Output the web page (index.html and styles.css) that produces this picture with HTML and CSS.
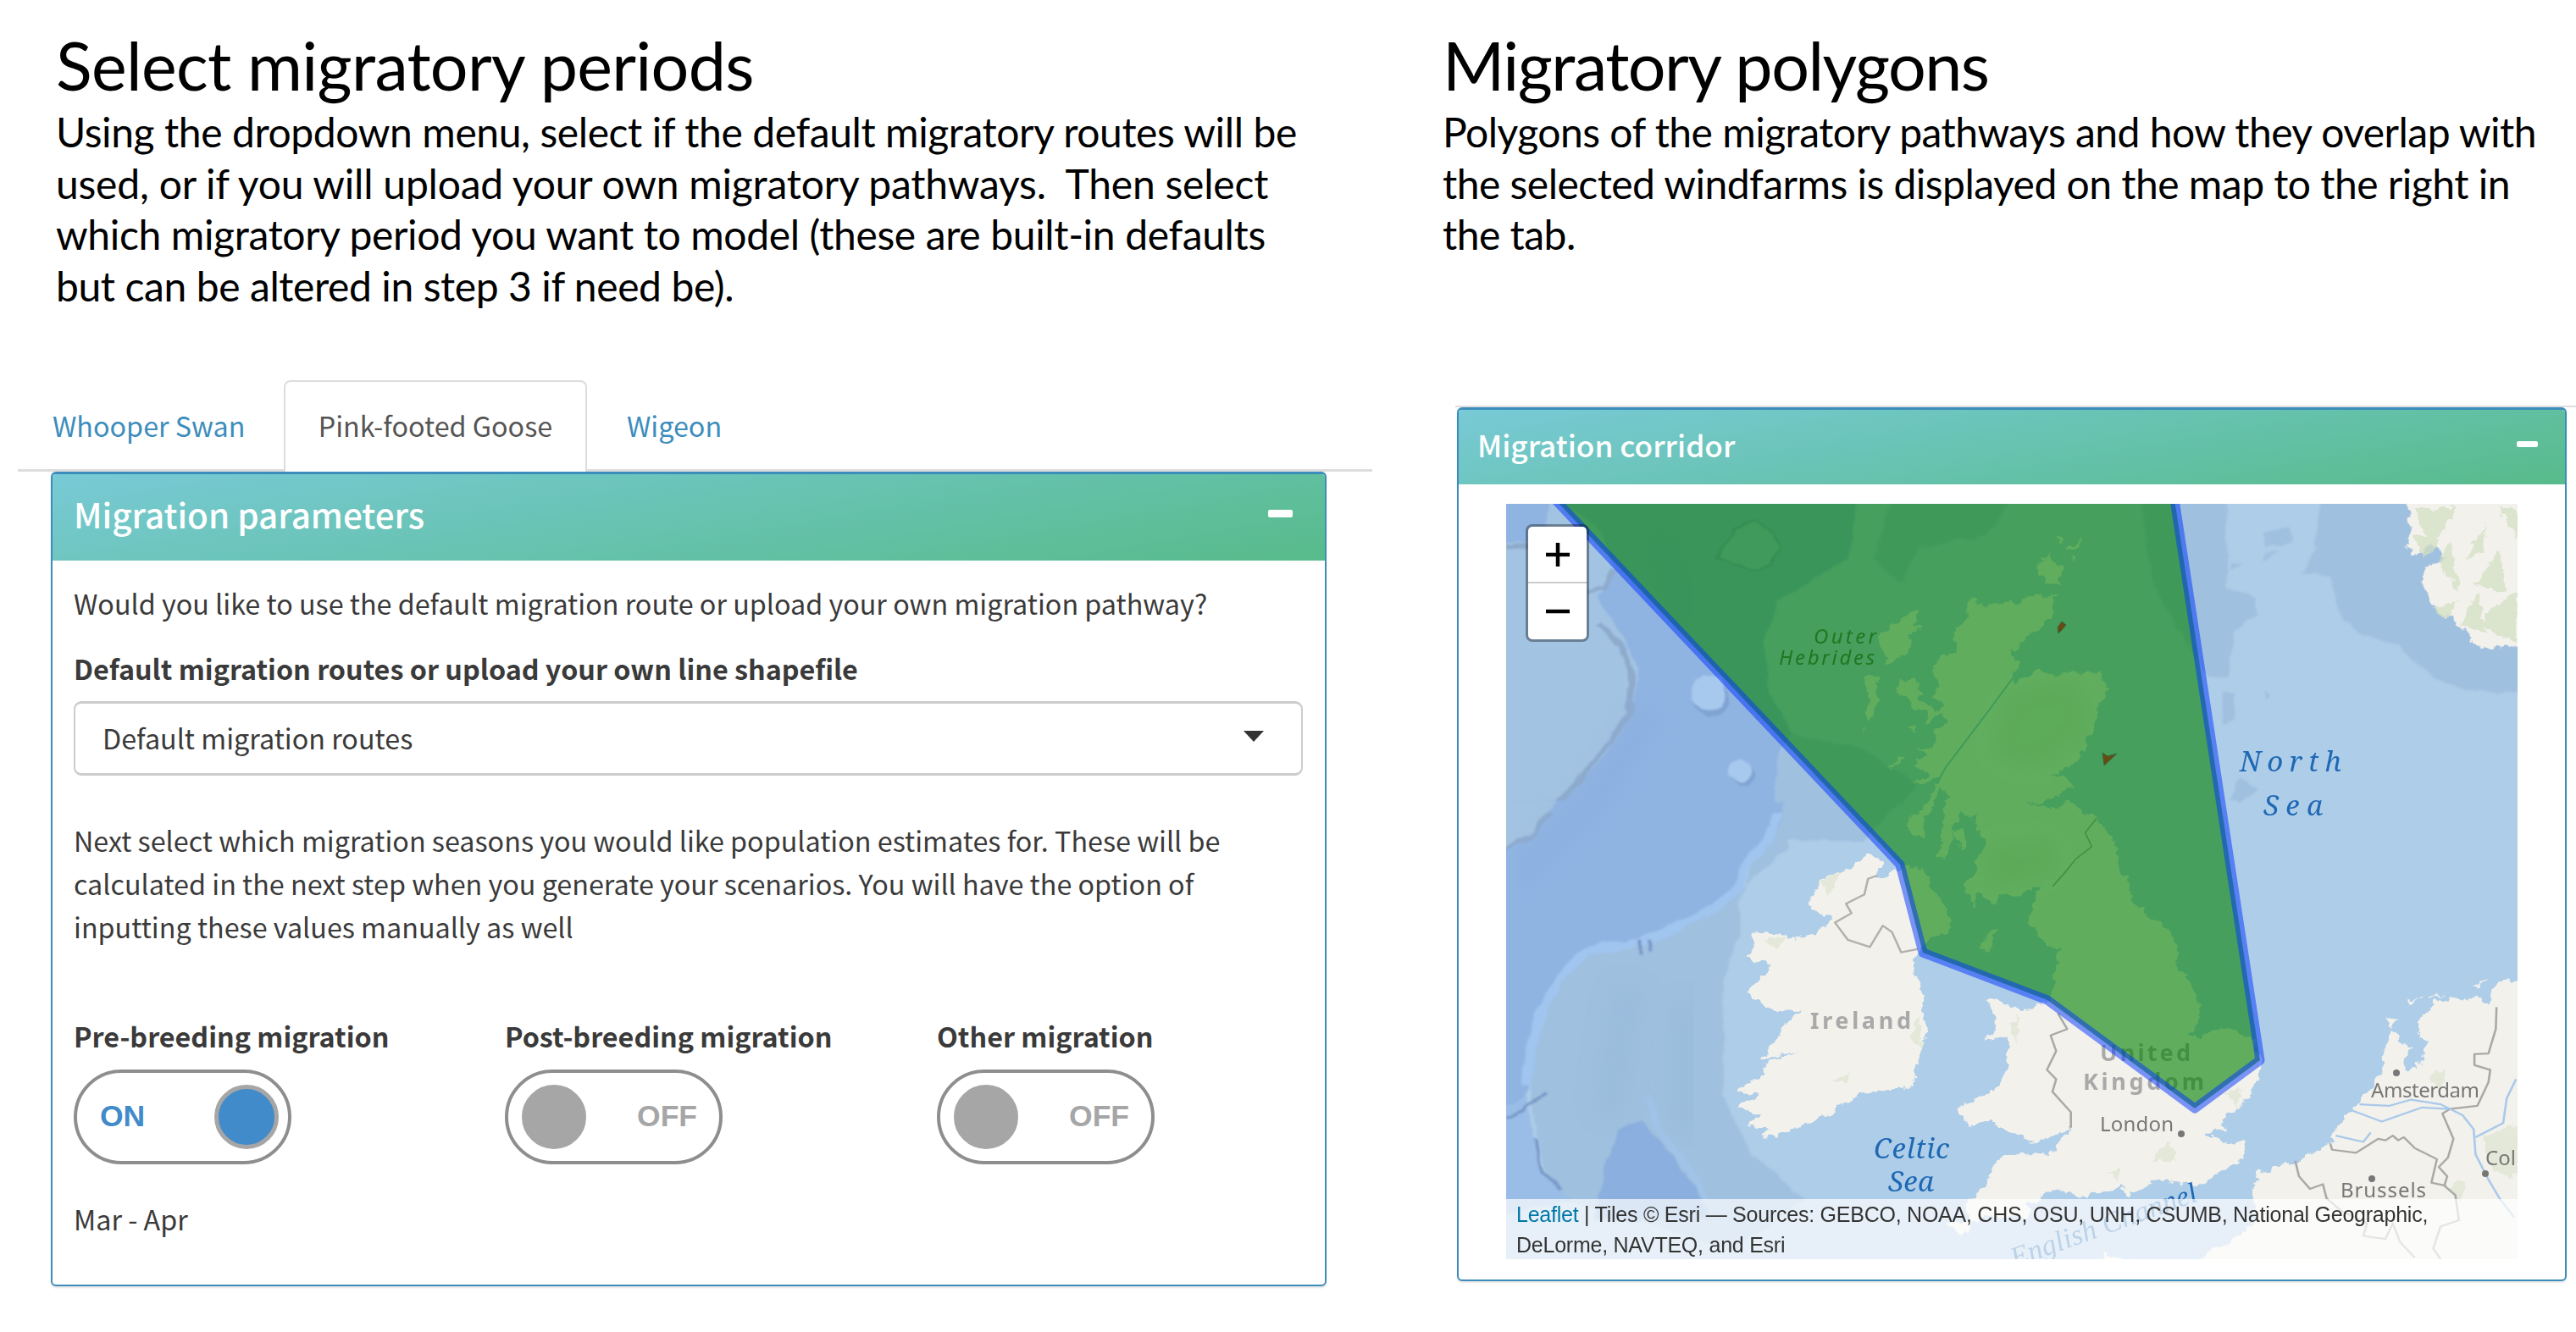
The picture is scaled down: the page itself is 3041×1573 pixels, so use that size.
FILE: index.html
```html
<!DOCTYPE html>
<html lang="en">
<head>
<meta charset="utf-8">
<title>Migratory periods and polygons</title>
<link rel="stylesheet" href="styles.css">
</head>
<body>
<main class="page">
  <section class="col col-left">
    <header class="intro">
      <h1 class="intro-title">Select migratory periods</h1>
      <p class="intro-text">Using the dropdown menu, select if the default migratory routes will be<br><span class="looser">used, or if you will upload your own migratory pathways.&nbsp; Then select</span><br><span class="loose">which migratory period you want to model (these are built-in defaults</span><br>but can be altered in step 3 if need be).</p>
    </header>
    <nav class="tabs">
      <a class="tab tab-first">Whooper Swan</a>
      <a class="tab tab-active">Pink-footed Goose</a>
      <a class="tab">Wigeon</a>
    </nav>
    <div class="panel panel-params">
      <div class="panel-head">
        <h2 class="panel-title">Migration parameters</h2>
        <span class="collapse"></span>
      </div>
      <div class="panel-body">
        <p class="question">Would you like to use the default migration route or upload your own migration pathway?</p>
        <p class="label">Default migration routes or upload your own line shapefile</p>
        <div class="select"><span>Default migration routes</span><svg class="caret" viewBox="0 0 24 13"><path d="M0 0H24L12 13Z"/></svg></div>
        <p class="next">Next select which migration seasons you would like population estimates for. These will be<br>calculated in the next step when you generate your scenarios. You will have the option of<br>inputting these values manually as well</p>
        <div class="toggles">
          <div class="toggle-group"><p class="label">Pre-breeding migration</p><div class="toggle toggle-on"><span>ON</span><i class="knob"></i></div></div>
          <div class="toggle-group"><p class="label">Post-breeding migration</p><div class="toggle"><i class="knob"></i><span>OFF</span></div></div>
          <div class="toggle-group"><p class="label">Other migration</p><div class="toggle"><i class="knob"></i><span>OFF</span></div></div>
        </div>
        <p class="months">Mar - Apr</p>
      </div>
    </div>
  </section>

  <section class="col col-right">
    <header class="intro">
      <h1 class="intro-title">Migratory polygons</h1>
      <p class="intro-text">Polygons of the migratory pathways and how they overlap with<br>the selected windfarms is displayed on the map to the right in<br>the tab.</p>
    </header>
    <div class="rule"></div>
    <div class="panel panel-map">
      <div class="panel-head">
        <h2 class="panel-title">Migration corridor</h2>
        <span class="collapse"></span>
      </div>
      <div class="map">
        <svg class="map-canvas" viewBox="1778 595 1194 892">
          <defs>
            <filter id="coast" x="-5%" y="-5%" width="110%" height="110%"><feTurbulence type="fractalNoise" baseFrequency="0.09" numOctaves="3" seed="4"/><feDisplacementMap in="SourceGraphic" scale="13" xChannelSelector="R" yChannelSelector="G"/></filter>
            <filter id="depth" x="-5%" y="-5%" width="110%" height="110%"><feTurbulence type="fractalNoise" baseFrequency="0.05" numOctaves="2" seed="9"/><feDisplacementMap in="SourceGraphic" scale="9" xChannelSelector="R" yChannelSelector="G"/><feGaussianBlur stdDeviation="1.2"/></filter>
            <filter id="soft" x="-5%" y="-5%" width="110%" height="110%"><feGaussianBlur stdDeviation="12"/></filter>
          </defs>
          <rect x="1778" y="595" width="1194" height="892" fill="#aecde8"/>
          <!-- sea depths -->
          <g filter="url(#depth)">
            <g transform="translate(1700 460) scale(.4337 .3333)">
              <path fill="#90b4e2" d="M100 300H1150L1110 600 920 750 880 900 900 1080 960 1220 920 1290 905 1580H100Z"/>
              <path fill="#9fc0df" d="M960 1220 920 1300 905 1600H1150L1300 1400 1150 1270Z"/>
              <path fill="#9fc0df" d="M1230 380 1180 600 1260 690 1300 560 1480 520 1568 380Z"/>
              <path fill="#a3c3e2" d="M100 545 290 540 290 470 310 380 440 500 475 640 450 700 430 740 500 880 540 980 520 1160 450 1300 300 1500 290 1590H100Z"/>
              <path fill="none" stroke="#8eabcd" stroke-width="18" d="M180 560 240 555M400 715 450 700 470 640M430 830 500 920 520 1000 515 1150 440 1290 310 1480 300 1600"/>
              <ellipse cx="737" cy="1095" rx="48" ry="62" fill="#7fa3d2"/><ellipse cx="731" cy="1074" rx="46" ry="62" fill="#a7c9ed"/>
              <ellipse cx="827" cy="1364" rx="36" ry="36" fill="#7fa3d2"/><ellipse cx="820" cy="1352" rx="34" ry="36" fill="#a7c9ed"/>
              <path fill="#9fc0e4" stroke="#7d9fcb" stroke-width="6" d="M755 600 800 500 850 460 900 500 930 560 900 620 850 645 810 620Z"/>
            </g>
            <g transform="translate(2360 460) scale(.4343 .3333)">
              <path fill="#9fc0df" d="M380 380H620V700L700 740V800L640 850 620 1020 570 1020 500 880 420 700Z"/>
              <path fill="#9fc0df" d="M875 380 860 560 820 650 900 660 930 820 1000 870 1090 910 1130 960 1190 1030 1300 1070 1430 1075V380Z"/>
              <path fill="#9fc0df" d="M720 500 790 490 800 540 720 560ZM640 1400 660 1380 700 1420 660 1460 630 1450ZM610 1070 640 1080V1170L610 1190ZM720 580 760 575 715 610ZM630 610 665 620 630 635ZM722 1070 738 1085 728 1105Z"/>
            </g>
            <g transform="translate(1700 960) scale(.4337 .37)">
              <path fill="#90b4e2" d="M100-40H940L920 70 850 130 830 220 760 300 540 400 400 430 340 500 290 620 250 760 240 880 200 960 100 1000Z"/>
              <path fill="#9fc0df" d="M945-40H1100L1050 30 960 50ZM940 0 900 90 850 150 835 230 760 310 640 380 540 430 400 450 340 520 290 640 250 780 245 900 280 1120 340 1234 800 1400 990 1234 840 1080 770 900V540L820 370 810 280 850 210 950 110Z"/>
              <path fill="#a3c3e2" d="M100-40H320L250 60 180 110 100 130Z"/>
              <path fill="none" stroke="#8eabcd" stroke-width="14" d="M300 0 240 80 170 120"/>
              <path fill="none" stroke="#a0c5ef" stroke-width="26" d="M920 0 890 90 830 170 810 240 740 310 640 370 540 415 400 440 330 520 275 640 240 780 235 870"/>
              <path fill="#9abde8" d="M100 990 235 900 270 1120 360 1240 100 1300Z"/>
              <path fill="none" stroke="#7797c6" stroke-width="9" d="M290 885 230 950 180 975M260 1040 270 1130 330 1200M545 405V450M570 405V440"/>
              <path fill="#8bafde" d="M420 1300 450 1120 490 1010 550 980 600 1050 640 1110 690 1180 740 1300Z"/>
              <path fill="none" stroke="#a0c3e6" stroke-width="22" d="M560 900 600 1020 650 1100 700 1170 720 1240"/>
            </g>
          </g>
          <!-- broad relief shading -->
          <g filter="url(#soft)" fill="none" stroke-linecap="round">
            <path stroke="#84a9db" stroke-opacity=".4" stroke-width="26" d="M1945 850 1880 950 1800 1030M1990 720 1960 640"/>
            <path stroke="#92b5d8" stroke-opacity=".3" stroke-width="36" d="M1920 1180 1900 1300M1990 1200V1320"/>
          </g>
          <!-- land -->
          <g filter="url(#coast)" fill="#f2f1ec">
            <!-- Scotland -->
            <g transform="translate(2200 595) scale(.3333)">
              <path d="M375 335 405 350 440 370 470 355 540 350 620 325 680 325 665 370 675 385 640 430 590 470 530 525 535 550 560 555 525 615 540 630 620 590 660 605 840 600 865 650 830 720 820 790 800 830 765 880 750 920 700 945 655 960 710 960 745 1000 700 1020 640 1060 580 1060 640 1075 690 1080 720 1055 820 1110 890 1190 910 1300 945 1410 1060 1500H590L600 1420 640 1365 600 1355 540 1395 480 1380 470 1420 430 1390 400 1375 390 1430 350 1350 390 1310 410 1250 435 1200 400 1150 400 1090 380 1120 350 1090 345 1110 325 1130 310 1210 285 1260 255 1250 280 1190 280 1120 300 1030 270 1000 245 1070 220 1110 215 1170 185 1180 150 1150 170 1100 220 1080 250 1010 280 960 230 985 170 995 230 960 180 930 195 905 230 900 190 870 250 855 250 800 290 770 260 740 285 720 250 680 270 640 250 610 265 550 290 540 330 520 315 490 330 470 320 440 355 425Z"/>
              <path d="M195 370 130 415 60 460 60 510 85 540 70 580 110 550 160 525 165 470 200 445 185 430 195 410ZM0 610 55 605 50 660 40 740 20 770 5 740 15 680ZM110 660 135 625 155 650 180 600 200 660 195 700 270 730 230 780 220 740 180 730 160 700ZM155 790 180 780 185 805ZM80 945 150 885 155 895 100 940ZM320 1160 345 1150 365 1210 350 1225 325 1200ZM0 800 15 790 0 815Z"/>
              <path d="M630 190 655 175 680 205 720 235 690 255 695 300 680 280 650 285 620 250ZM680 125 695 115 705 140 690 145ZM720 160 770 125 760 150 730 165ZM735 180 750 195 740 200Z"/>
              <path d="M150 1280 210 1290 235 1350 270 1400 250 1430 290 1430 305 1490V1520H205Z"/>
            </g>
            <g transform="translate(2360 460) scale(.4343 .3333)">
              <path d="M1100 380 1120 480 1110 560 1130 590 1175 545 1220 600 1155 630V700L1190 780 1270 850 1280 890 1330 920 1430 905V380Z"/>
            </g>
            <g transform="translate(1700 960) scale(.4337 .37)">
              <path d="M1170 130 1210 165 1180 215 1240 180 1300 170 1350 260 1385 340 1360 400 1330 400 1300 450 1285 490 1310 560 1325 690 1300 800 1285 870 1150 895 1060 960 920 1035 875 1030 900 1010 835 1000 870 965 810 940 870 900 800 885 860 850 880 830 890 795 980 760 880 785 930 700 975 630 890 625 835 570 870 530 900 490 835 460 860 420 850 385 940 385 960 405 1020 390 1070 340 1000 295 1040 210 1140 160Z"/>
              <path d="M1500 370 1520 375 1490 440 1470 435ZM1485 600 1530 595 1560 640 1520 650ZM1600 660 1520 680 1470 735 1550 710 1560 840 1500 890 1405 940 1440 1000 1500 980 1540 1010 1620 1000V860L1565 830 1560 720 1620 700ZM1600 1085 1535 1090 1500 1130 1490 1190 1430 1250 1440 1300 1370 1310 1425 1350 1470 1290 1600 1290Z"/>
            </g>
            <!-- England, Wales and the continent -->
            <g transform="translate(2360 960) scale(.4343 .37)">
              <path d="M150 200H345L370 310 440 350 490 430 480 470 520 545 545 620V670L515 705 540 730 570 695 640 695 690 730 715 800 690 890 655 940 600 990 615 1010 560 1030 630 1055 675 1050 665 1100 620 1130 540 1190 430 1175 370 1215 340 1190 220 1225 150 1195 100 1240-10 1290V1130L15 1095 150 1085 160 1050 205 1000 150 1030 100 1050-10 1000V880L30 800 20 720-10 700V600L60 630 130 610 150 560V490L170 430H130L85 330 110 240Z"/>
              <path d="M1430 530 1350 540 1330 610 1300 585 1190 600 1140 660V720L1165 730 1150 790 1100 830V780L1125 750 1095 740 1080 700 1060 700 1040 830 980 920 910 1020 900 1055 805 1110 700 1150 690 1240 700 1300 620 1380 560 1400 530 1460H1430ZM1070 650 1085 660 1065 690 1055 680ZM1110 600 1150 590 1115 610ZM1170 583 1220 580 1170 590ZM1290 550 1330 530 1300 560ZM330 1200 380 1195 350 1225ZM280 1405 360 1430 290 1430Z"/>
            </g>
          </g>
          <!-- vegetation tints -->
          <g filter="url(#coast)" fill="#d3dfc3" fill-opacity=".75">
            <path d="M2850 600H2900L2870 650ZM2890 640 2905 700 2880 670ZM2940 720 2972 700V760L2930 740ZM2920 690 2950 650 2960 700ZM2870 720 2900 710 2890 730ZM2950 600 2972 600V640ZM2880 640 2860 660 2850 630ZM2905 735 2925 700 2935 750ZM2910 660 2935 620 2930 650Z"/>
            <path fill-opacity=".5" d="M2255 1225 2265 1200 2270 1240ZM2160 1275 2185 1270 2175 1280ZM2540 1370 2560 1350 2570 1370ZM2370 1210 2385 1200 2380 1230ZM2395 1260 2410 1270ZM2870 1270 2885 1260 2880 1290ZM2890 1400 2910 1395 2905 1420ZM2930 1340 2972 1330V1390L2940 1380ZM2490 1385 2505 1380 2500 1395ZM2630 1290 2645 1280 2640 1310ZM2150 1040 2170 1030 2160 1060ZM2080 1110 2110 1105 2100 1120Z"/>
          </g>
          <g filter="url(#soft)" fill="#cfe0c2" fill-opacity=".35">
            <path d="M2370 820 2450 800 2470 860 2400 910 2350 890ZM2340 1000 2420 990 2430 1030 2350 1050Z"/>
          </g>
          <!-- borders and rivers -->
          <g fill="none" stroke-linejoin="round">
            <g transform="translate(1700 960) scale(.4337 .37)" stroke="#b2b1ae" stroke-width="6"><path d="M1190 200 1165 210 1155 260 1105 290 1120 320 1075 350 1110 405 1170 428 1205 360 1230 380 1255 445 1300 435"/></g>
            <g transform="translate(2360 960) scale(.4343 .37)">
              <g stroke="#a9a9a7" stroke-width="6"><path d="M160 640 185 690 140 710 155 760 130 820 155 850 145 890 195 955V1005"/><path d="M1352 620 1350 690 1330 768 1292 770V805L1335 820 1330 860 1300 935 1225 945 1205 960 1235 1040 1220 1100 1195 1130 1218 1160 1210 1190 1240 1220 1250 1300 1200 1320 1180 1390 1200 1425M900 1055 905 1075 970 1085 1030 1040 1050 1045 1070 1030 1085 1045 1100 1035 1130 1070 1190 1105 1175 1180 1215 1190M805 1110 815 1160 845 1200 880 1185 890 1230 930 1270 1000 1310 990 1350 1050 1360 1070 1310 1090 1370 1130 1420" /></g>
              <path stroke="#a9c9ea" stroke-width="6" d="M980 930 1060 935 1120 915 1200 930 1260 965 1290 1010 1295 1090 1330 1170 1360 1230 1400 1290M1295 1035 1370 990 1380 910 1405 850M960 950 1040 985 1150 940 1220 945M915 1030 990 1050 1010 1020M580 1035 560 1025"/>
            </g>
            <g transform="translate(2200 595) scale(.3333)">
              <path stroke="#a9a9a7" stroke-width="5" d="M825 1115 785 1165 808 1215 750 1260 710 1310 670 1355"/>
              <path stroke="#9fc0df" stroke-width="6" d="M530 615 430 750 290 935 260 990"/>
            </g>
          </g>
          <!-- sea and place labels -->
          <g class="sea">
            <text x="2644" y="911" textLength="120">North</text>
            <text x="2672" y="963" textLength="70">Sea</text>
            <text x="2212" y="1368" textLength="89">Celtic</text>
            <text x="2229" y="1407" textLength="54">Sea</text>
            <text class="channel" transform="translate(2378 1497) rotate(-20)" textLength="232">English Channel</text>
          </g>
          <g class="area">
            <text x="2141" y="760" textLength="74">Outer</text>
            <text x="2100" y="785" textLength="113">Hebrides</text>
          </g>
          <g class="country">
            <text x="2137" y="1215" textLength="119">Ireland</text>
            <text x="2479" y="1253" textLength="107">United</text>
            <text x="2459" y="1287" textLength="143">Kingdom</text>
          </g>
          <g class="city">
            <text x="2479" y="1336" textLength="87">London</text>
            <text x="2799" y="1296" textLength="128">Amsterdam</text>
            <text x="2763" y="1414" textLength="101">Brussels</text>
            <text x="2934" y="1376" textLength="36">Col</text>
            <circle cx="2575" cy="1339" r="4"/><circle cx="2829" cy="1267" r="4"/><circle cx="2800" cy="1392" r="4"/><circle cx="2934" cy="1386" r="4"/>
          </g>
          <!-- migration corridor -->
          <path class="corridor" d="M1817 570 2243 1021 2270 1125 2417 1181 2591 1309 2668 1252 2564 570Z"/>
          <!-- wind farms -->
          <path fill="#6a4a12" stroke="#2d6b3e" d="M2434 734 2439 738 2434 744 2430 748 2429 741ZM2482 889 2488 893 2499 890 2484 904Z"/>
        </svg>
        <div class="zoom"><span><svg viewBox="0 0 28 28"><path d="M0 14H28M14 0V28"/></svg></span><span><svg viewBox="0 0 28 28"><path d="M0 14H28"/></svg></span></div>
        <div class="attribution"><a>Leaflet</a> | Tiles © Esri — Sources: GEBCO, NOAA, CHS, OSU, UNH, CSUMB, National Geographic,<br>DeLorme, NAVTEQ, and Esri</div>
      </div>
    </div>
  </section>
</main>
</body>
</html>
```
FILE: styles.css
```css
* { box-sizing: border-box; }
body { margin: 0; background: #fff; color: #3a3a3a; font-family: "Noto Sans CJK SC", "Open Sans", sans-serif; overflow: hidden; }
h1, h2, p { margin: 0; font-weight: 400; }
.page { display: grid; grid-template-columns: 1620px 1323px; column-gap: 98px; height: 1573px; }

.intro { color: #000; font-family: Lato, sans-serif; white-space: nowrap; }
.intro-title { font-size: 79px; line-height: 90px; padding-top: 32px; margin-bottom: 4px; letter-spacing: -.7px; }
.intro-text { font-size: 48px; line-height: 60.6px; letter-spacing: -.41px; }
.intro-text .looser { letter-spacing: -.22px; }
.intro-text .loose { letter-spacing: -.36px; }
.col-left .intro { padding-left: 66px; height: 449px; }
.col-right .intro { margin-left: -15px; height: 479px; }
.col-right .intro-title { letter-spacing: -1.5px; }
.col-right .intro-text { letter-spacing: -.52px; }

.tabs { display: flex; height: 108px; margin-left: 21px; border-bottom: 3px solid #ddd; }
.tab { display: flex; align-items: center; padding: 0 47px; font-size: 32.3px; color: #3c8dbc; white-space: nowrap; }
.tab-first { width: 314px; padding: 0 0 0 41px; }
.tab-active { width: 358px; height: 108px; padding: 0 0 4px; justify-content: center; background: #fff; color: #555; border: 2px solid #ddd; border-bottom: 0; border-radius: 8px 8px 0 0; }

.panel { border: 2px solid #3c8dbc; border-top-width: 3px; border-radius: 6px; box-shadow: 0 2px 2px rgba(0,0,0,.1); background: #fff; overflow: hidden; }
.panel-params { margin-left: 60px; width: 1506px; height: 962px; }
.panel-map { margin-left: 2px; width: 1310px; height: 1032px; }
.panel-head { display: flex; justify-content: space-between; align-items: center; background: linear-gradient(170deg, #78cad6 0%, #57bb8a 100%); color: #fff; }
.panel-params .panel-head { height: 102px; padding: 0 38px 9px 25px; }
.panel-map .panel-head { height: 88px; padding: 0 32px 7px 22px; }
.panel-title { font-weight: 500; font-size: 40.4px; line-height: 60px; white-space: nowrap; }
.panel-map .panel-title { font-size: 35.2px; }
.collapse { width: 29px; height: 9px; border-radius: 2px; background: #fff; }
.panel-map .collapse { width: 25px; height: 7px; }

.panel-body { padding: 25px 26px 0 25px; font-size: 32.3px; line-height: 51.3px; white-space: nowrap; }
.label { font-weight: 700; }
.question { margin-bottom: 26px; }
.select { display: flex; align-items: center; justify-content: space-between; height: 88px; margin-top: 12px; padding: 0 44px 0 32px; border: 3px solid #ccc; border-width: 3px 2px; border-radius: 9px; }
.caret { width: 24px; height: 13px; margin-top: -4px; fill: #333; }
.next { margin-top: 51px; }
.toggles { display: grid; grid-template-columns: 509px 510px auto; margin-top: 78px; }
.toggle { display: flex; align-items: center; justify-content: space-between; width: 257px; height: 112px; margin-top: 13px; padding: 0 26px 0 16px; border: 4px solid #8e8e8e; border-radius: 56px; font: 700 35.5px "Liberation Sans", sans-serif; color: #a6a6a6; }
.toggle-on { padding: 0 11px 0 27px; color: #428bca; }
.knob { width: 76px; height: 76px; border: 5px solid #a6a6a6; border-radius: 50%; background: #a6a6a6; }
.toggle-on .knob { background: #428bca; }
.months { margin-top: 39px; }

.rule { height: 2px; background: #ddd; }
.map { position: relative; width: 1194px; height: 892px; margin: 23px 0 0 56px; overflow: hidden; }
.map-canvas { display: block; width: 1194px; height: 892px; }
.sea { font: italic 33px "Noto Serif", "Liberation Serif", serif; fill: #1f68b4; }
.sea .channel { font-family: "Liberation Serif", serif; font-size: 34px; }
.area { font: italic 24px "Noto Sans", sans-serif; fill: #4d6b50; }
.country { font: 700 27px "Noto Sans", sans-serif; fill: #a9a9a9; }
.city { font: 24px "Noto Sans", sans-serif; fill: #777; }
.corridor { fill: #008000; fill-opacity: .6; stroke: #0033ff; stroke-opacity: .5; stroke-width: 11; stroke-linejoin: round; }
.zoom { position: absolute; left: 26px; top: 27px; width: 69px; border-radius: 5px; background: #fff; box-shadow: 0 0 0 3px rgba(0,0,0,.35); }
.zoom span { display: flex; align-items: center; justify-content: center; height: 66px; }
.zoom span:first-child { height: 67px; border-bottom: 2px solid #ccc; }
.zoom svg { width: 28px; height: 28px; stroke: #000; stroke-width: 4.5; }
.attribution { position: absolute; left: 0; right: 0; bottom: 0; height: 71px; padding: 1px 0 0 12px; background: rgba(255,255,255,.7); font: 25px/35.5px "Liberation Sans", sans-serif; letter-spacing: -.24px; color: #333; white-space: nowrap; }
.attribution a { color: #0078a8; }
```
